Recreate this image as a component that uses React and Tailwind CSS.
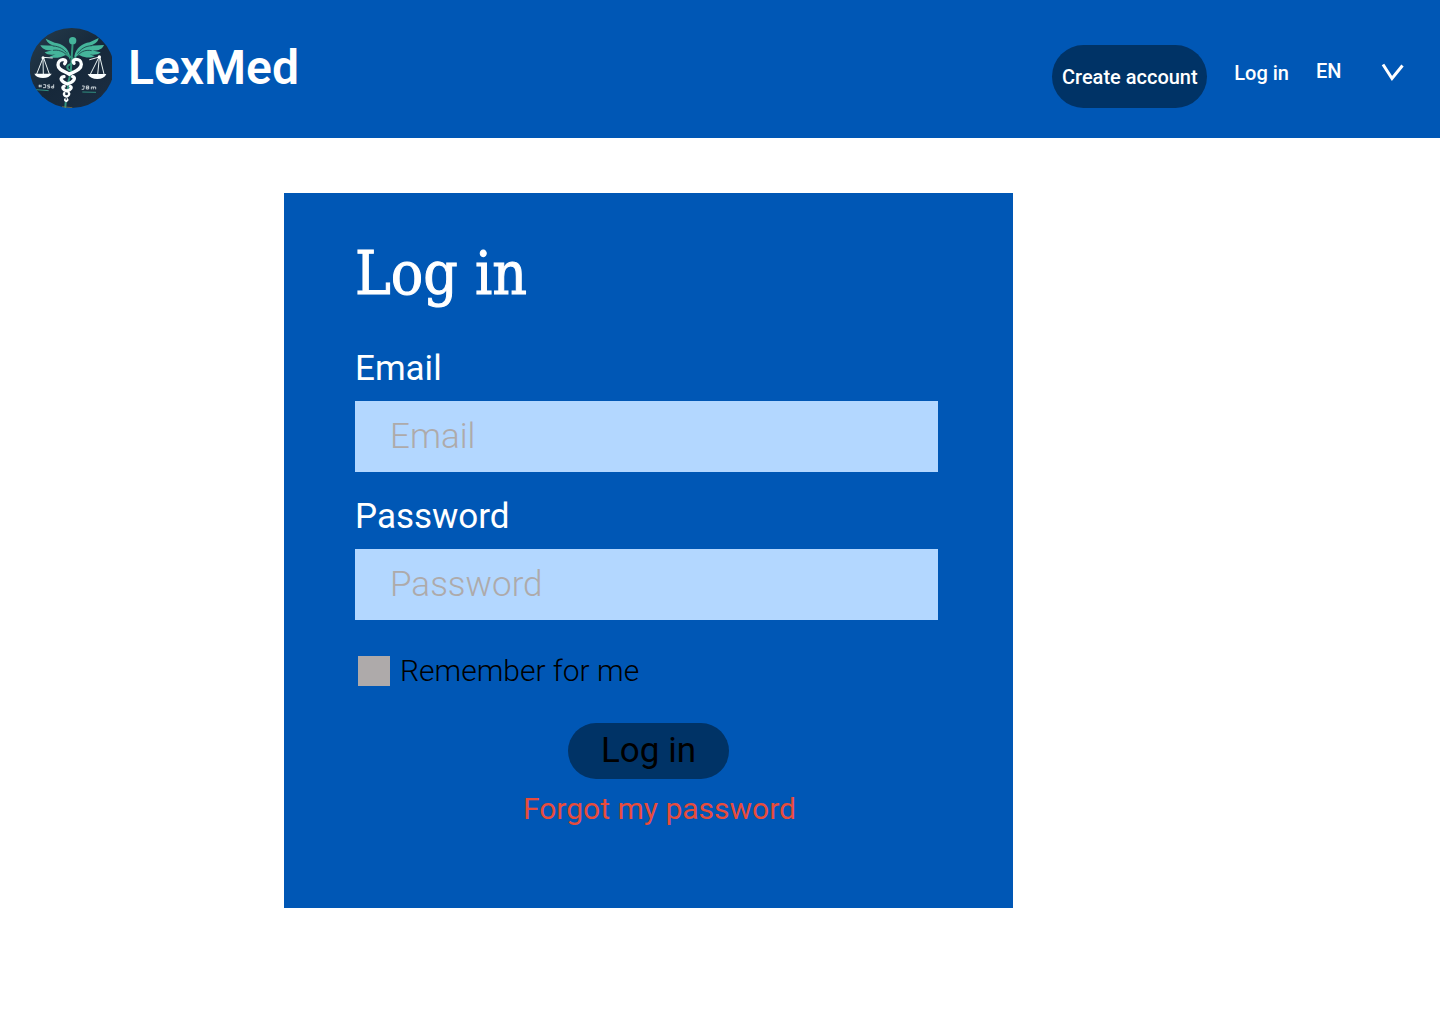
import { useState } from "react";

function Logo() {
  return (
    <svg viewBox="30 24 246 240" className="h-20 w-[82px] shrink-0" role="img" aria-label="LexMed emblem">
      <defs>
        <linearGradient id="disc" x1="0" y1="0" x2="1" y2="1">
          <stop offset="0" stopColor="#263c4b" />
          <stop offset="0.5" stopColor="#16283a" />
          <stop offset="1" stopColor="#1c2e42" />
        </linearGradient>
      </defs>
      <ellipse cx="155" cy="144" rx="126" ry="120" fill="url(#disc)" />
      {/* wings */}
      <g fill="#45b59b">
        <path d="M150 108C145 84 127 70 104 68L77 56C82 70 94 75 104 77L61 76C68 90 84 93 99 90L74 97C84 107 100 105 110 101L88 110C104 117 122 112 132 107C142 103 146 108 150 120Z" />
        <path d="M163 108C169 84 186 70 209 67L236 54C233 69 221 74 209 77L252 75C245 91 230 93 214 91L242 97C231 107 214 105 203 101L225 109C209 116 193 112 182 107C173 103 168 108 164 120Z" />
      </g>
      <g fill="none" stroke="#1b3d45" strokeWidth="2.5">
        <path d="M98 78C120 79 132 88 142 101M99 91C115 89 128 93 139 104" />
        <path d="M216 77C194 78 182 88 172 101M215 92C199 89 186 93 175 104" />
      </g>
      {/* staff and snake */}
      <g fill="none" stroke="#35977f" strokeLinecap="round">
        <path d="M158 68L152 160" strokeWidth="6" />
        <path d="M142 98C133 108 168 113 163 124C158 134 138 132 142 144C145 154 160 150 157 158" strokeWidth="6" />
        <path d="M150 168L144 188M145 198L142 211M137 248L136 261" strokeWidth="6" />
      </g>
      <circle cx="158" cy="62" r="11" fill="#45b59b" />
      {/* heart and tapering links */}
      <g fill="none" stroke="#fbffff" strokeLinecap="round" strokeLinejoin="round">
        <path d="M134 131C147 116 114 113 114 135C114 150 134 154 148 163C164 154 184 149 184 133C184 112 151 115 162 130" strokeWidth="10" />
        <path d="M132 170C117 172 122 185 142 192C162 185 169 173 158 170" strokeWidth="10" />
        <path d="M133 199C124 201 128 209 141 213C152 209 158 202 151 199" strokeWidth="9" />
        <path d="M133 219C129 224 134 228 140 230C147 227 150 222 146 218" strokeWidth="7" />
        <path d="M135 237C133 241 137 243 139 244C142 242 145 240 142 237" strokeWidth="5" />
      </g>
      {/* scales */}
      <g fill="none" stroke="#e9f3f3" strokeWidth="3" strokeLinecap="round">
        <path d="M69 112L97 114M69 114L50 162M69 114L70 164M71 114L88 162" />
        <path d="M238 111L209 119M236 113L211 163M238 113L233 164M240 113L252 162" />
      </g>
      <g fill="#fbffff">
        <circle cx="69" cy="113" r="4.5" />
        <circle cx="238" cy="111" r="5" />
        <path d="M43 161H95C91 169 81 174 69 174C57 174 47 170 43 161Z" />
        <path d="M203 162H259C255 172 245 177 232 177C219 177 208 172 203 162Z" />
      </g>
      {/* small inscriptions */}
      <g fill="none" stroke="#e2e9ed" strokeWidth="2.5">
        <path d="M56 198H65M58 194V202M63 194V202M70 194H77V203H69M90 195H83V199H89V204H82M101 193V204H95V199H101" />
        <path d="M186 198H193L191 208H185M199 198H206V207H199V198M199 203H206M214 208V201H227V208M220 201V208" />
      </g>
      <path d="M49 209L86 212M187 216L228 217" stroke="#35a28d" strokeWidth="2.5" />
      <path d="M126 260L157 263" stroke="#8a7a4a" strokeWidth="2" />
    </svg>
  );
}

function Header() {
  return (
    <header className="flex h-[138px] items-start justify-between bg-[#0057b5] pr-9 pl-[30px] text-white">
      <a href="#home" className="flex items-center gap-4 pt-7">
        <Logo />
        <span className="text-5xl font-semibold">LexMed</span>
      </a>
      <nav className="flex items-start pt-[45px] text-xl font-medium">
        <button type="button" className="h-[63px] w-[155px] rounded-full bg-[#003366] whitespace-nowrap">
          Create account
        </button>
        <a href="#login" className="ml-[27px] flex h-14 items-center whitespace-nowrap">
          Log in
        </a>
        <div className="relative ml-[27px] h-13 w-[88px]">
          <select aria-label="Language" className="h-full w-full appearance-none bg-transparent">
            <option>EN</option>
          </select>
          <svg viewBox="0 0 24 20" className="pointer-events-none absolute top-[17px] right-0 h-5 w-6" fill="none" stroke="white" strokeWidth="3" aria-hidden="true">
            <path d="M3 2.5L12 16.5L22.5 3.5" />
          </svg>
        </div>
      </nav>
    </header>
  );
}

function Field({ id, label, type }) {
  return (
    <div className="flex flex-col gap-2.5">
      <label htmlFor={id} className="text-[35px]/[44px] text-white">
        {label}
      </label>
      <input
        id={id}
        type={type}
        placeholder={label}
        className="h-[71px] w-full bg-[#b3d7ff] px-[35px] text-[35px] font-light text-black outline-none placeholder:text-[#aeaaaa]"
      />
    </div>
  );
}

export default function App() {
  const [remember, setRemember] = useState(false);
  return (
    <div className="min-h-screen bg-white font-['Roboto',sans-serif]">
      <Header />
      <main className="pt-[55px] pb-[116px] pl-[284px]">
        <form className="flex w-full max-w-[729px] flex-col bg-[#0057b5] px-[71px] pt-11 pb-[81px]" onSubmit={(e) => e.preventDefault()}>
          <h1 className="font-['DejaVu_Serif_Condensed','DejaVu_Serif',serif] text-[60px]/[72px] text-white [-webkit-text-stroke:1px_white]">Log in</h1>
          <div className="flex flex-col gap-[23px] pt-[38px] pr-1">
            <Field id="email" label="Email" type="email" />
            <Field id="password" label="Password" type="password" />
          </div>
          <label className="flex items-center gap-2.5 pt-8 pl-[3px] text-[30px]/[38px] font-light text-black">
            <input
              type="checkbox"
              checked={remember}
              onChange={(e) => setRemember(e.target.checked)}
              className="h-[30px] w-8 appearance-none bg-[#aeaaaa] checked:bg-[#003366]"
            />
            Remember for me
          </label>
          <button type="submit" className="mt-[33px] h-14 w-[161px] self-center rounded-full bg-[#003366] text-[35px] text-black">
            Log in
          </button>
          <a href="#forgot" className="mt-3 self-center pl-[22px] text-[30px]/[36px] text-[#e74c3c]">
            Forgot my password
          </a>
        </form>
      </main>
    </div>
  );
}
